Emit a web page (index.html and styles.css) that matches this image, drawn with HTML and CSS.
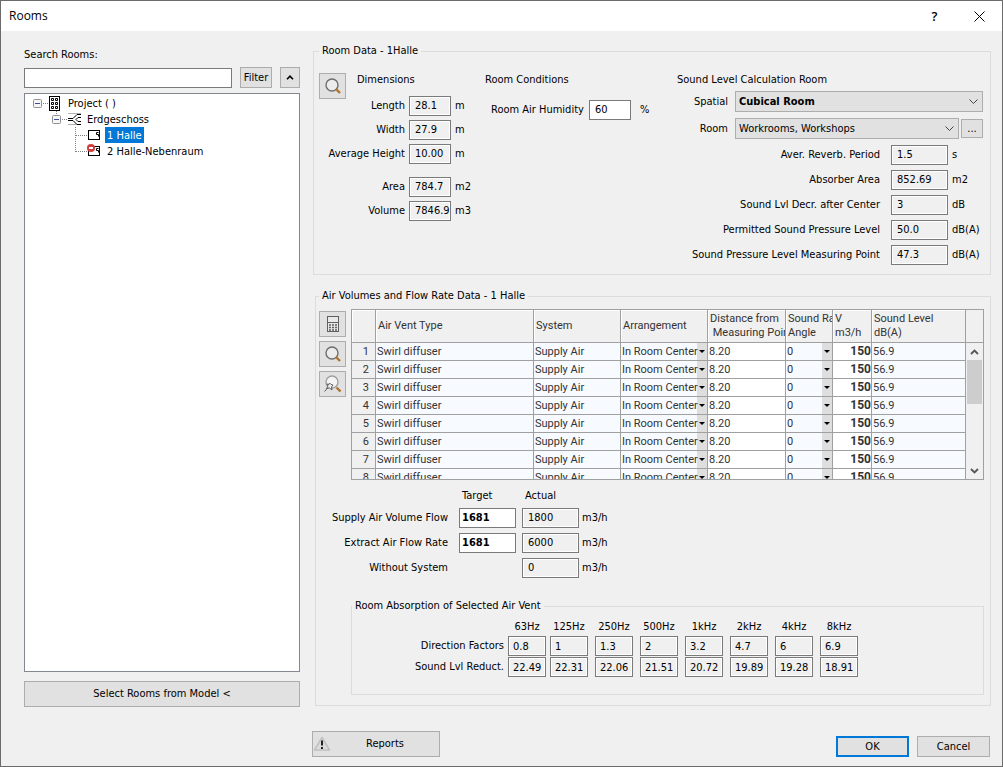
FILE: index.html
```html
<!DOCTYPE html>
<html lang="en">
  <head>
    <meta charset="UTF-8" />
    <meta name="viewport" content="width=device-width, initial-scale=1.0" />
    <title>Rooms</title>
    <link rel="stylesheet" href="styles.css">
  </head>
  <body>
    <div class="window">
      <header class="titlebar">
        <h1>Rooms</h1>
        <button type="button" class="title-btn" aria-label="Help">?</button>
        <button type="button" class="title-btn" aria-label="Close">
          <svg width="11" height="11" viewBox="0 0 11 11"><path d="M.5.5l10 10M10.5.5l-10 10" stroke="#000" fill="none" /></svg>
        </button>
      </header>

      <main class="content">
        <!-- Room search and tree -->
        <section class="sidebar">
          <label for="search">Search Rooms:</label>
          <div class="search-row">
            <input type="text" id="search" class="field" />
            <button type="button" class="btn">Filter</button>
            <button type="button" class="btn collapse" aria-label="Collapse">
              <svg width="8" height="5" viewBox="0 0 8 5"><path d="M1 4.2L4 1.2l3 3" stroke="#000" stroke-width="1.6" fill="none" /></svg>
            </button>
          </div>
          <ul class="tree">
            <li>
              <div class="node">
                <svg width="16" height="16" viewBox="0 0 16 16"><rect x=".5" y="4.5" width="8" height="8" rx="1" fill="#f6f6f6" stroke="#919191" /><path d="M2 8.5h5" stroke="#3c50a0" /><path d="M10 8.5h6" stroke="#808080" stroke-dasharray="1 1" /></svg>
                <svg width="19" height="16" viewBox="0 0 19 16"><rect x=".5" y="1.5" width="10" height="14" fill="#fff" stroke="#000" /><path d="M2.5 3.5h2v2h-2zM6.5 3.5h2v2h-2zM2.5 7.5h2v2h-2zM6.5 7.5h2v2h-2zM2.5 11.5h2v2h-2zM6.5 11.5h2v2h-2z" fill="none" stroke="#000" /></svg>
                <span>Project ( )</span>
              </div>
              <ul>
                <li>
                  <div class="node">
                    <svg width="16" height="16" viewBox="0 0 16 16"><path d="M4.5 0v4" stroke="#808080" stroke-dasharray="1 1" /><rect x=".5" y="4.5" width="8" height="8" rx="1" fill="#f6f6f6" stroke="#919191" /><path d="M2 8.5h5" stroke="#3c50a0" /><path d="M10 8.5h6" stroke="#808080" stroke-dasharray="1 1" /></svg>
                    <svg width="19" height="16" viewBox="0 0 19 16"><path d="M0 2.5h13M0 13.5h13" stroke="#b0b0b0" /><path d="M0 7.5h5l4-4h4M0 9.5h5l4 4h4M13 6.5h-3l-2 2 2 2h3" fill="none" stroke="#000" /></svg>
                    <span>Erdgeschoss</span>
                  </div>
                  <ul>
                    <li class="node">
                      <svg width="12" height="16" viewBox="0 0 12 16"><path d="M.5 0v16M1 8.5h11" stroke="#808080" stroke-dasharray="1 1" /></svg>
                      <svg width="20" height="16" viewBox="0 0 20 16"><rect x="1.5" y="3.5" width="11" height="9" fill="#fff" stroke="#000" /><path d="M11.5 5.5h-2v2h2v2" fill="none" stroke="#000" /></svg>
                      <span class="selected">1 Halle</span>
                    </li>
                    <li class="node">
                      <svg width="12" height="16" viewBox="0 0 12 16"><path d="M.5 0v9M1 8.5h11" fill="none" stroke="#808080" stroke-dasharray="1 1" /></svg>
                      <svg width="20" height="16" viewBox="0 0 20 16"><rect x="1.5" y="3.5" width="11" height="9" fill="#fff" stroke="#000" /><path d="M11.5 5.5h-2v2h2v2" fill="none" stroke="#000" /><circle cx="4" cy="5" r="4" fill="#d23c3c" /><path d="M2 5h4" stroke="#fff" stroke-width="2" /></svg>
                      <span>2 Halle-Nebenraum</span>
                    </li>
                  </ul>
                </li>
              </ul>
            </li>
          </ul>
          <button type="button" class="btn tall">Select Rooms from Model &lt;</button>
        </section>

        <section class="details">
          <fieldset class="group room-data">
            <legend>Room Data - 1Halle</legend>
            <div class="dimensions">
              <button type="button" class="btn icon-btn" aria-label="Show room">
                <svg width="18" height="18" viewBox="0 0 18 18"><circle cx="8" cy="8" r="6" fill="#ececec" stroke="#6e6e6e" stroke-width="1.4" /><path d="M12 12l4 4" stroke="#b0742c" stroke-width="2.4" /></svg>
              </button>
              <h2>Dimensions</h2>
              <label for="length">Length</label><input type="text" id="length" class="field" value="28.1" readonly /><span>m</span>
              <label for="width">Width</label><input type="text" id="width" class="field" value="27.9" readonly /><span>m</span>
              <label for="height">Average Height</label><input type="text" id="height" class="field" value="10.00" readonly /><span>m</span>
              <div class="spacer"></div>
              <label for="area">Area</label><input type="text" id="area" class="field" value="784.7" readonly /><span>m2</span>
              <label for="volume">Volume</label><input type="text" id="volume" class="field" value="7846.9" readonly /><span>m3</span>
            </div>

            <div class="conditions">
              <h2>Room Conditions</h2>
              <div class="humidity">
                <label for="humidity">Room Air Humidity</label>
                <input type="text" id="humidity" class="field" value="60" />
                <span>%</span>
              </div>
            </div>

            <div class="sound">
              <h2>Sound Level Calculation Room</h2>
              <div class="select-row">
                <label for="spatial">Spatial</label>
                <select id="spatial" class="combo strong"><option>Cubical Room</option></select>
              </div>
              <div class="select-row">
                <label for="room">Room</label>
                <select id="room" class="combo"><option>Workrooms, Workshops</option></select>
                <button type="button" class="btn more" aria-label="More rooms">...</button>
              </div>
              <div class="sound-values">
                <label for="reverb">Aver. Reverb. Period</label><input type="text" id="reverb" class="field" value="1.5" readonly /><span>s</span>
                <label for="absorber">Absorber Area</label><input type="text" id="absorber" class="field" value="852.69" readonly /><span>m2</span>
                <label for="decrease">Sound Lvl Decr. after Center</label><input type="text" id="decrease" class="field" value="3" readonly /><span>dB</span>
                <label for="permitted">Permitted Sound Pressure Level</label><input type="text" id="permitted" class="field" value="50.0" readonly /><span>dB(A)</span>
                <label for="measured">Sound Pressure Level Measuring Point</label><input type="text" id="measured" class="field" value="47.3" readonly /><span>dB(A)</span>
              </div>
            </div>
          </fieldset>

          <fieldset class="group air-data">
            <legend>Air Volumes and Flow Rate Data - 1 Halle</legend>
            <div class="vents">
              <div class="tools">
                <button type="button" class="btn icon-btn" aria-label="Calculate">
                  <svg width="18" height="18" viewBox="0 0 18 18"><rect x="3.5" y="1.5" width="11" height="15" fill="#e8e8e8" stroke="#5f5f5f" /><path d="M3 7.5h12" stroke="#5f5f5f" /><path d="M5 10h8M5 12.5h8M5 15h8" stroke="#5f5f5f" stroke-width="1.5" stroke-dasharray="2 1" /></svg>
                </button>
                <button type="button" class="btn icon-btn" aria-label="Show vent">
                  <svg width="18" height="18" viewBox="0 0 18 18"><circle cx="8" cy="8" r="6" fill="#ececec" stroke="#6e6e6e" stroke-width="1.4" /><path d="M12 12l4 4" stroke="#b0742c" stroke-width="2.4" /></svg>
                </button>
                <button type="button" class="btn icon-btn" aria-label="Pin view">
                  <svg width="18" height="18" viewBox="0 0 18 18"><circle cx="8" cy="7" r="6" fill="#f4f4f4" stroke="#a0a0a0" stroke-width="1.4" /><path d="M12.500 12.500l4 4" stroke="#b0742c" stroke-width="2.4" /><path d="M5.500 8l1.500 1.500 2 .500-1.500 2 .5 3-2.500-2-3 .5 1.500-2.500L3 9l2 .500zM4 12.500L.5 16.500" fill="#f0f0f0" stroke="#606060" /></svg>
                </button>
              </div>
              <div class="grid-box">
                <div class="grid-view">
                  <table class="grid">
                    <colgroup>
                      <col class="c-num" /><col /><col class="c-mid" /><col class="c-mid" />
                      <col class="c-dist" /><col class="c-angle" /><col class="c-vol" /><col class="c-level" />
                    </colgroup>
                    <thead>
                      <tr>
                        <th></th>
                        <th>Air Vent Type</th>
                        <th>System</th>
                        <th>Arrangement</th>
                        <th>Distance from<br />&nbsp;Measuring Point</th>
                        <th>Sound Rad.<br />Angle</th>
                        <th>V<br />m3/h</th>
                        <th>Sound Level<br />dB(A)</th>
                      </tr>
                    </thead>
                    <tbody id="vents"></tbody>
                  </table>
                </div>
                <div class="scroll">
                  <div class="scroll-head"></div>
                  <button type="button" aria-label="Scroll up"><svg width="9" height="6" viewBox="0 0 9 6"><path d="M1 5l3.5-3.5L8 5" fill="none" stroke="#555" stroke-width="1.8" /></svg></button>
                  <div class="thumb"></div>
                  <button type="button" class="down" aria-label="Scroll down"><svg width="9" height="6" viewBox="0 0 9 6"><path d="M1 1l3.5 3.5L8 1" fill="none" stroke="#555" stroke-width="1.8" /></svg></button>
                </div>
              </div>
            </div>

            <div class="flows">
              <span></span><span>Target</span><span class="actual">Actual</span><span></span>
              <label for="supplyTarget">Supply Air Volume Flow</label>
              <input type="text" id="supplyTarget" class="field strong" value="1681" />
              <input type="text" class="field" value="1800" aria-label="Supply actual" readonly /><span>m3/h</span>
              <label for="extractTarget">Extract Air Flow Rate</label>
              <input type="text" id="extractTarget" class="field strong" value="1681" />
              <input type="text" class="field" value="6000" aria-label="Extract actual" readonly /><span>m3/h</span>
              <label for="without">Without System</label>
              <span></span>
              <input type="text" id="without" class="field" value="0" readonly /><span>m3/h</span>
            </div>

            <fieldset class="group absorption">
              <legend>Room Absorption of Selected Air Vent</legend>
              <table class="bands">
                <thead>
                  <tr id="bandNames"><td></td></tr>
                </thead>
                <tbody>
                  <tr id="factors"><th>Direction Factors</th></tr>
                  <tr id="reductions"><th>Sound Lvl Reduct.</th></tr>
                </tbody>
              </table>
            </fieldset>
          </fieldset>
        </section>

        <footer class="actions">
          <button type="button" class="btn reports">
            <svg width="18" height="16" viewBox="0 0 18 16"><path d="M9 1.5L16.5 14h-15z" fill="#dcdcdc" stroke="#c0c0c0" stroke-width="1.5" stroke-linejoin="round" /><path d="M9 4.5v5M9 11v2" stroke="#222" stroke-width="2" /></svg>
            <span>Reports</span>
          </button>
          <button type="button" class="btn dialog-btn default">OK</button>
          <button type="button" class="btn dialog-btn">Cancel</button>
        </footer>
      </main>
    </div>
    <script src="script.js"></script>
  </body>
</html>
```
FILE: styles.css
```css
* {
  box-sizing: border-box;
}

body {
  margin: 0;
  background-color: #f0f0f0;
  color: #000;
  font-family: "DejaVu Sans Condensed", "Noto Sans", sans-serif;
  font-size: 11px;
  line-height: 14px;
}

h1,
h2 {
  margin: 0;
  font-size: inherit;
  font-weight: normal;
  white-space: nowrap;
}

input,
select,
button {
  margin: 0;
  font: inherit;
  color: inherit;
  border-radius: 0;
}

label,
legend,
span {
  white-space: nowrap;
}

svg {
  display: block;
  flex: none;
}

.window {
  display: flex;
  flex-direction: column;
  min-height: 100vh;
  border: 1px solid #6b6b6b;
}

.titlebar {
  display: flex;
  align-items: center;
  height: 30px;
  padding-left: 8px;
  background-color: #fff;
}

.titlebar h1 {
  flex: 1;
  font-family: "Open Sans", sans-serif;
  font-size: 12px;
}

.title-btn {
  display: flex;
  align-items: center;
  justify-content: center;
  width: 45px;
  height: 30px;
  padding: 0;
  border: none;
  background: none;
  font-family: "Open Sans", sans-serif;
  font-size: 13px;
  font-weight: 600;
}

.content {
  flex: 1;
  display: grid;
  grid-template-columns: 276px 1fr;
  grid-template-rows: 1fr auto;
  gap: 24px 12px;
  padding: 13px 11px 9px 23px;
}

/* controls */

.field {
  width: 100%;
  height: 20px;
  padding: 0 0 0 5px;
  border: 1px solid #7a7a7a;
  background-color: #fff;
}

.field:read-only {
  background-color: #f0f0f0;
  box-shadow: inset 0 0 0 1px #fff;
}

.strong {
  font-weight: bold;
}

.btn {
  padding: 0;
  border: 1px solid #adadad;
  background-color: #e1e1e1;
  text-align: center;
}

.icon-btn {
  display: flex;
  align-items: center;
  justify-content: center;
  width: 27px;
  height: 26px;
}

.combo {
  flex: 1;
  min-width: 0;
  height: 21px;
  padding: 0 20px 0 3px;
  border: 1px solid #adadad;
  appearance: none;
  background: #e1e1e1 url("data:image/svg+xml,%3Csvg xmlns='http://www.w3.org/2000/svg' width='9' height='6'%3E%3Cpath d='M.5 .5l4 4 4-4' fill='none' stroke='%23444'/%3E%3C/svg%3E") no-repeat right 4px center;
}

.group {
  min-width: 0;
  margin: 0;
  padding: 0;
  border: 1px solid #dcdcdc;
}

.group legend {
  padding: 0 3px;
}

/* sidebar */

.sidebar {
  display: flex;
  flex-direction: column;
  padding-top: 4px;
}

.search-row {
  display: flex;
  align-items: flex-end;
  gap: 8px;
  margin: 5px 0 5px;
}

.search-row .field {
  flex: 1;
  width: auto;
  min-width: 0;
}

.search-row .btn {
  width: 32px;
  height: 21px;
}

.search-row .collapse {
  display: flex;
  align-items: center;
  justify-content: center;
  width: 20px;
}

.tree {
  flex: 1;
  margin: 0 0 9px;
  padding: 1px 8px;
  border: 1px solid #828790;
  background-color: #fff;
  list-style: none;
}

.tree ul {
  margin: 0;
  padding-left: 19px;
  list-style: none;
}

.tree ul ul {
  padding-left: 23px;
}

.node {
  display: flex;
  height: 16px;
  line-height: 18px;
}

.node .selected {
  margin: 0 -2px;
  padding: 0 2px;
  background-color: #0078d7;
  color: #fff;
}

.tall {
  height: 26px;
}

/* room data */

.details {
  display: flex;
  flex-direction: column;
  gap: 14px;
  min-width: 0;
}

.room-data {
  display: flex;
  gap: 6px;
  margin-left: 1px;
  padding: 15px 7px 9px 5px;
}

.dimensions {
  display: grid;
  grid-template-columns: 27px 55px 42px 24px;
  grid-template-rows: 19px;
  align-content: start;
  gap: 4px;
  width: 160px;
  line-height: 20px;
}

.dimensions .icon-btn {
  grid-area: 1 / 1;
}

.dimensions h2 {
  grid-area: 1 / 2 / 2 / 5;
  padding-left: 7px;
  line-height: 14px;
}

.dimensions label {
  grid-column: 1 / 3;
  text-align: right;
}

.dimensions .spacer {
  grid-column: 1 / 5;
  height: 5px;
}

.humidity {
  display: grid;
  grid-template-columns: auto 42px auto;
  gap: 5px;
  padding: 13px 0 0 6px;
  line-height: 20px;
}

.humidity span {
  padding-left: 4px;
}

.sound {
  width: 306px;
  margin-left: auto;
}

.select-row {
  display: flex;
  align-items: center;
  gap: 2px;
  margin-bottom: 6px;
}

.sound h2 {
  margin-bottom: 4px;
}

.select-row label {
  width: 56px;
  padding-right: 5px;
  text-align: right;
}

.more {
  width: 22px;
  height: 19px;
}

.sound-values {
  display: grid;
  grid-template-columns: 1fr 57px 31px;
  gap: 5px 4px;
  line-height: 20px;
}

.sound-values label {
  padding-right: 7px;
  text-align: right;
}

/* air volumes */

.air-data {
  margin-left: 3px;
  padding: 6px 6px 10px 3px;
}

.vents {
  display: flex;
  align-items: flex-start;
  gap: 5px;
}

.tools {
  display: flex;
  flex-direction: column;
  gap: 4px;
  padding-top: 2px;
}

.grid-box {
  flex: 1;
  display: flex;
  min-width: 0;
  height: 171px;
  border: 1px solid #a0a0a0;
}

.grid-view {
  flex: 1;
  min-width: 0;
  overflow: hidden;
}

.grid {
  width: 100%;
  table-layout: fixed;
  border-spacing: 0;
  color: #333;
  font-family: Roboto, Arial, sans-serif;
  font-size: 11px;
}

.grid th,
.grid td {
  height: 18px;
  padding: 0 0 0 1px;
  border: solid #a0a0a0;
  border-width: 0 1px 1px 0;
  background-color: #f7fbff;
  text-align: left;
  font-weight: normal;
  line-height: 17px;
  white-space: nowrap;
  overflow: hidden;
}

.grid thead th {
  height: 33px;
  padding-left: 2px;
  background-color: #f0f0f0;
  line-height: 14px;
  box-shadow: inset 1px 1px #fff;
}

.grid tbody th {
  padding-right: 6px;
  background-color: #f0f0f0;
  text-align: right;
}

.grid td.edit {
  background-color: #fff;
}

.grid input,
.grid select {
  display: block;
  width: 100%;
  height: 17px;
  padding: 0;
  border: none;
  background-color: transparent;
}

.grid .volume {
  font-size: 12px;
  font-weight: bold;
  text-align: right;
}

.grid select {
  appearance: none;
  background: url("data:image/svg+xml,%3Csvg xmlns='http://www.w3.org/2000/svg' width='10' height='17'%3E%3Cpath d='M0 0h10v17H0z' fill='%23dedede'/%3E%3Cpath d='M2 7h6L5 10z'/%3E%3C/svg%3E") no-repeat right center;
}

.c-num {
  width: 24px;
}

.c-mid {
  width: 87px;
}

.c-dist {
  width: 78px;
}

.c-angle {
  width: 47px;
}

.c-vol {
  width: 39px;
}

.c-level {
  width: 94px;
}

.scroll {
  display: flex;
  flex-direction: column;
  width: 17px;
}

.scroll-head {
  height: 33px;
  border-bottom: 1px solid #a0a0a0;
}

.scroll button {
  display: flex;
  align-items: center;
  justify-content: center;
  height: 17px;
  padding: 0;
  border: none;
  background: none;
}

.scroll .thumb {
  height: 44px;
  margin: 0 1px;
  background-color: #cdcdcd;
}

.scroll .down {
  margin-top: auto;
}

.flows {
  display: grid;
  grid-template-columns: 137px 60px 57px auto;
  gap: 5px 3px;
  padding-top: 9px;
  line-height: 20px;
}

.flows > span:nth-child(-n + 4) {
  padding-left: 3px;
  line-height: 14px;
}

.flows .actual {
  padding-left: 6px;
}

.flows label {
  padding-right: 8px;
  text-align: right;
}

.flows .field {
  width: 57px;
}

.flows .strong {
  padding-left: 2px;
}

.absorption {
  margin: 21px 0 0 32px;
  padding: 7px 0 16px;
}

.bands {
  border-spacing: 0;
  table-layout: fixed;
  width: 513px;
}

.bands th,
.bands td {
  width: 45px;
  padding: 0 7px 1px 0;
  font-weight: normal;
}

.bands thead th {
  padding-bottom: 2px;
  text-align: center;
}

.bands tr > :first-child {
  width: 156px;
  padding-right: 4px;
  text-align: right;
}

.bands tr > :nth-child(2) {
  width: 42px;
  padding-right: 4px;
}

.bands .field {
  display: block;
  width: 38px;
  padding-left: 4px;
}

/* bottom buttons */

.actions {
  grid-column: 2;
  display: flex;
  align-items: flex-end;
  gap: 8px;
  padding-right: 1px;
}

.reports {
  display: flex;
  align-items: center;
  width: 128px;
  height: 26px;
  margin-right: auto;
}

.reports span {
  flex: 1;
}

.dialog-btn {
  width: 73px;
  height: 21px;
}

.default {
  border: 2px solid #0078d7;
}
```
FILE: script.js
```js
const vents = Array.from({ length: 8 }, () => ({
  type: "Swirl diffuser",
  system: "Supply Air",
  arrangement: "In Room Center",
  distance: "8.20",
  angle: "0",
  volume: "150",
  level: "56.9",
}));

const bands = [
  ["63Hz", "0.8", "22.49"],
  ["125Hz", "1", "22.31"],
  ["250Hz", "1.3", "22.06"],
  ["500Hz", "2", "21.51"],
  ["1kHz", "3.2", "20.72"],
  ["2kHz", "4.7", "19.89"],
  ["4kHz", "6", "19.28"],
  ["8kHz", "6.9", "18.91"],
];

document.getElementById("vents").innerHTML = vents
  .map(
    (v, i) => `
    <tr>
      <th>${i + 1}</th>
      <td>${v.type}</td>
      <td>${v.system}</td>
      <td><select aria-label="Arrangement ${i + 1}"><option>${v.arrangement}</option></select></td>
      <td class="edit"><input type="text" value="${v.distance}" aria-label="Distance ${i + 1}" /></td>
      <td><select aria-label="Angle ${i + 1}"><option>${v.angle}</option></select></td>
      <td class="edit"><input type="text" class="volume" value="${v.volume}" aria-label="Volume ${i + 1}" /></td>
      <td>${v.level}</td>
    </tr>`
  )
  .join("");

const cell = (value, label) =>
  `<td><input type="text" class="field" value="${value}" aria-label="${label}" readonly /></td>`;

bands.forEach(([name, factor, reduction]) => {
  document.getElementById("bandNames").insertAdjacentHTML("beforeend", `<th>${name}</th>`);
  document.getElementById("factors").insertAdjacentHTML("beforeend", cell(factor, `Direction factor ${name}`));
  document.getElementById("reductions").insertAdjacentHTML("beforeend", cell(reduction, `Sound reduction ${name}`));
});
```
